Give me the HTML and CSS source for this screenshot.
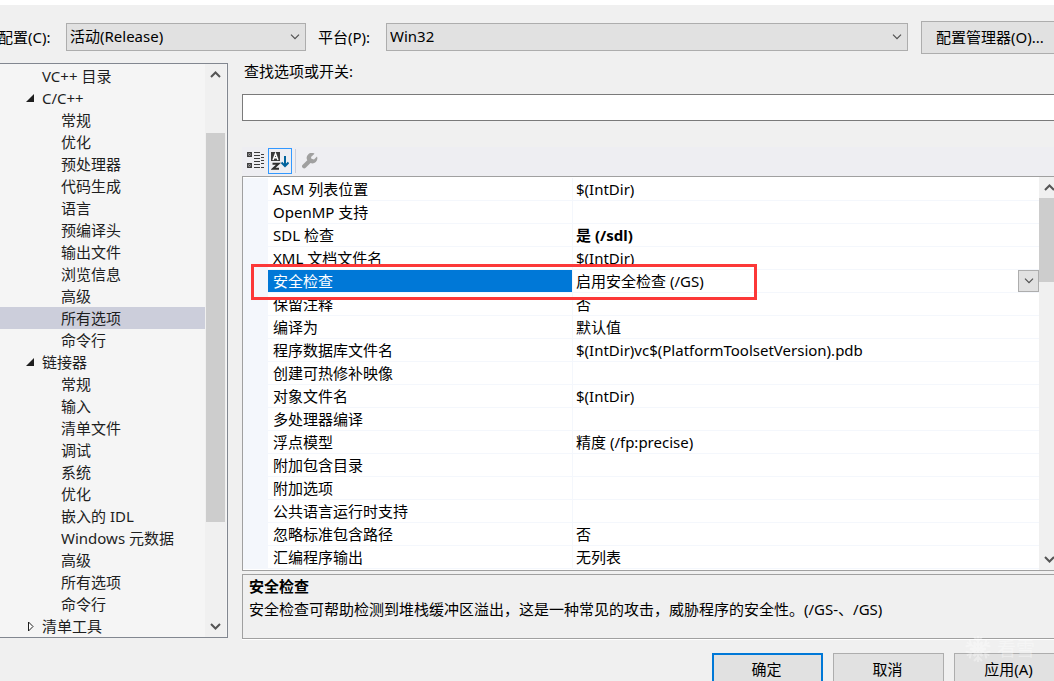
FILE: index.html
```html
<!DOCTYPE html>
<html lang="zh-CN">
<head>
<meta charset="utf-8">
<title>属性页</title>
<link rel="stylesheet" href="styles.css">
</head>
<body>
<main class="dialog">
  <div class="config-bar">
    <label class="config-label" for="config">配置(C):</label>
    <span class="select-wrap select-config">
      <select id="config"><option>活动(Release)</option></select>
      <svg class="chevron" viewBox="0 0 10 6"><path d="M1 .7l4 4 4-4"/></svg>
    </span>
    <label class="platform-label" for="platform">平台(P):</label>
    <span class="select-wrap select-platform">
      <select id="platform"><option>Win32</option></select>
      <svg class="chevron" viewBox="0 0 10 6"><path d="M1 .7l4 4 4-4"/></svg>
    </span>
    <button class="btn btn-manager" type="button">配置管理器(O)...</button>
  </div>

  <div class="content">
    <nav class="tree">
      <ul class="tree-list">
        <li class="group">VC++ 目录</li>
        <li class="group"><svg class="arrow" viewBox="0 0 8 8"><path d="M8 0v8H0z" fill="#1e1e1e"/></svg>C/C++</li>
        <li>常规</li>
        <li>优化</li>
        <li>预处理器</li>
        <li>代码生成</li>
        <li>语言</li>
        <li>预编译头</li>
        <li>输出文件</li>
        <li>浏览信息</li>
        <li>高级</li>
        <li class="current">所有选项</li>
        <li>命令行</li>
        <li class="group"><svg class="arrow" viewBox="0 0 8 8"><path d="M8 0v8H0z" fill="#1e1e1e"/></svg>链接器</li>
        <li>常规</li>
        <li>输入</li>
        <li>清单文件</li>
        <li>调试</li>
        <li>系统</li>
        <li>优化</li>
        <li>嵌入的 IDL</li>
        <li>Windows 元数据</li>
        <li>高级</li>
        <li>所有选项</li>
        <li>命令行</li>
        <li class="group"><svg class="arrow arrow-closed" viewBox="0 0 6 11"><path d="M.5 1v9L5 5.5z" fill="#fff" stroke="#1e1e1e"/></svg>清单工具</li>
      </ul>
      <div class="scrollbar scrollbar-tree">
        <button type="button" class="scroll-btn" aria-label="向上滚动"><svg viewBox="0 0 11 7"><path d="M1 6l4.500-4.500L10 6"/></svg></button>
        <div class="track track-tree"><div class="thumb"></div></div>
        <button type="button" class="scroll-btn" aria-label="向下滚动"><svg viewBox="0 0 11 7"><path d="M1 1l4.500 4.500L10 1"/></svg></button>
      </div>
    </nav>

    <section class="panel">
      <label class="search-label" for="search">查找选项或开关:</label>
      <input class="search" id="search" type="text">
      <div class="toolbar">
        <button type="button" class="tool" aria-label="按分类顺序">
          <svg width="18" height="17" viewBox="0 0 18 17" fill="none" stroke="#3b3b3b"><path stroke-width="1.500" d="M.8.8h3.400v3.400H.8zM.8 11.800h3.400v3.400H.8z"/><path d="M2 2.500h1M2 13.500h1M7 .5h6M7 3.500h6M7 6.500h6M7 9.500h6M7 12.500h6M7 15.500h6M14 2.500h3M14 5.500h3M14 8.500h3M14 11.500h3M14 15.500h3"/></svg>
        </button>
        <button type="button" class="tool tool-on" aria-label="按字母顺序">
          <svg width="18" height="18" viewBox="0 0 18 18" fill="none"><path d="M0 0h9v9H0z" fill="#3b3b3b"/><path d="M2 8l2.500-6.500L7 8M3 5.800h3" stroke="#fff" stroke-width="1.400"/><path d="M1.500 11.700h6L2 16.800h6" stroke="#2d2d2d" stroke-width="2"/><path d="M14 4v10M10.500 10.500L14 14l3.500-3.500" stroke="#00639c" stroke-width="2"/></svg>
        </button>
        <span class="tool-sep"></span>
        <button type="button" class="tool" aria-label="属性页" disabled>
          <svg width="16" height="16" viewBox="0 0 16 16"><path d="M12.500.7A5 5 0 0 0 5.300 7.200L.7 11.800a2.100 2.100 0 0 0 3 3L8.500 10A5 5 0 0 0 15 3.600L12 6.500 9.400 5.800 9 3.900z" fill="#a0a0a0"/></svg>
        </button>
      </div>

      <div class="grid">
        <table class="props">
          <colgroup><col class="col-gutter"><col class="col-name"><col></colgroup>
          <tbody>
            <tr><td></td><th>ASM 列表位置</th><td>$(IntDir)</td></tr>
            <tr><td></td><th>OpenMP 支持</th><td></td></tr>
            <tr><td></td><th>SDL 检查</th><td class="strong">是 (/sdl)</td></tr>
            <tr><td></td><th>XML 文档文件名</th><td>$(IntDir)</td></tr>
            <tr class="selected"><td></td><th>安全检查<span class="highlight"></span></th><td class="editing">启用安全检查 (/GS)<button type="button" class="drop" aria-label="展开"><svg viewBox="0 0 10 6"><path d="M1 .7l4 4 4-4"/></svg></button></td></tr>
            <tr><td></td><th>保留注释</th><td>否</td></tr>
            <tr><td></td><th>编译为</th><td>默认值</td></tr>
            <tr><td></td><th>程序数据库文件名</th><td>$(IntDir)vc$(PlatformToolsetVersion).pdb</td></tr>
            <tr><td></td><th>创建可热修补映像</th><td></td></tr>
            <tr><td></td><th>对象文件名</th><td>$(IntDir)</td></tr>
            <tr><td></td><th>多处理器编译</th><td></td></tr>
            <tr><td></td><th>浮点模型</th><td>精度 (/fp:precise)</td></tr>
            <tr><td></td><th>附加包含目录</th><td></td></tr>
            <tr><td></td><th>附加选项</th><td></td></tr>
            <tr><td></td><th>公共语言运行时支持</th><td></td></tr>
            <tr><td></td><th>忽略标准包含路径</th><td>否</td></tr>
            <tr><td></td><th>汇编程序输出</th><td>无列表</td></tr>
          </tbody>
        </table>
        <div class="scrollbar">
          <button type="button" class="scroll-btn" aria-label="向上滚动"><svg viewBox="0 0 11 7"><path d="M1 6l4.500-4.500L10 6"/></svg></button>
          <div class="track"><div class="thumb thumb-grid"></div></div>
          <button type="button" class="scroll-btn" aria-label="向下滚动"><svg viewBox="0 0 11 7"><path d="M1 1l4.500 4.500L10 1"/></svg></button>
        </div>
      </div>

      <div class="description">
        <strong>安全检查</strong>
        <p>安全检查可帮助检测到堆栈缓冲区溢出，这是一种常见的攻击，威胁程序的安全性。(/GS-、/GS)</p>
      </div>
    </section>
  </div>

  <footer class="actions">
    <button type="button" class="btn btn-default">确定</button>
    <button type="button" class="btn">取消</button>
    <button type="button" class="btn">应用(A)</button>
    <div class="watermark">
      <svg width="26" height="28" viewBox="-13 -14 26 28"><g id="arm"><path d="M0 0v-13M-4-12l4 4 4-4M-4-7l4 4 4-4"/></g><use href="#arm" transform="rotate(60)"/><use href="#arm" transform="rotate(120)"/><use href="#arm" transform="rotate(180)"/><use href="#arm" transform="rotate(240)"/><use href="#arm" transform="rotate(300)"/></svg>
      <span>看雪</span>
    </div>
  </footer>
</main>
</body>
</html>
```
FILE: styles.css
```css
* { box-sizing: border-box; }

body {
  margin: 0;
  height: 100vh;
  overflow: hidden;
  background: #f0f0f0;
  color: #000;
  font: 15px/20px "Noto Sans", "Noto Sans CJK SC", sans-serif;
}

button, select, input { font: inherit; color: inherit; margin: 0; }

.dialog {
  margin: 0 -11px 0 -2px;
  border-top: 5px solid #fff;
}

.config-bar {
  display: flex;
  align-items: center;
  padding-top: 16px;
  white-space: nowrap;
}
.config-label, .platform-label { width: 68px; flex: none; padding-bottom: 2px; }
.platform-label { margin-left: 12px; }
.select-wrap { position: relative; height: 28px; }
.select-config { width: 240px; flex: none; }
.select-platform { flex: 1; }
.select-wrap select {
  display: block;
  width: 100%;
  height: 28px;
  padding: 0 24px 2px 3px;
  border: 1px solid #adadad;
  border-radius: 0;
  background: #e1e1e1;
  appearance: none;
}
.chevron {
  position: absolute;
  right: 6px;
  top: 11px;
  width: 10px;
  height: 6px;
  pointer-events: none;
}
.chevron path, .drop path { fill: none; stroke: #505050; stroke-width: 1.2; }

.btn {
  width: 111px;
  height: 33px;
  padding: 0 2px 2px 0;
  border: 1px solid #adadad;
  background: #e1e1e1;
}
.btn-manager { width: 140px; margin: 0 4px 0 13px; flex: none; }
.btn-default { border: 2px solid #0078d7; }

.content { display: flex; margin-top: 9px; }
.config-bar .select-wrap { margin-bottom: 2px; }

.tree {
  display: flex;
  flex: none;
  align-self: flex-start;
  width: 230px;
  border: 1px solid #828790;
  background: #f5f5f5;
  color: #1e1e1e;
}
.tree-list {
  flex: 1;
  margin: 0;
  padding: 1px 0 0;
  list-style: none;
}
.tree-list li {
  position: relative;
  height: 22px;
  line-height: 22px;
  padding-left: 62px;
  white-space: nowrap;
}
.tree-list .group { padding-left: 43px; }
.tree-list .current { background: #cccedb; }
.arrow {
  position: absolute;
  left: 27px;
  top: 7px;
  width: 8px;
  height: 8px;
}
.arrow-closed { left: 29px; top: 6px; width: 6px; height: 11px; }

.scrollbar {
  display: flex;
  flex-direction: column;
  flex: none;
  width: 21px;
  background: #f0f0f0;
}
.scrollbar-tree { margin-right: 1px; }
.scroll-btn {
  display: flex;
  align-items: center;
  justify-content: center;
  height: 21px;
  padding: 0;
  border: 0;
  background: none;
}
.scroll-btn svg { width: 11px; height: 7px; }
.scroll-btn path { fill: none; stroke: #555; stroke-width: 2; }
.track { flex: 1; display: flex; flex-direction: column; }
.track-tree { padding: 48px 1px 94px; }
.thumb { flex: 1; background: #cdcdcd; }
.thumb-grid { flex: none; height: 84px; }

.panel { flex: 1; min-width: 0; margin: 0 4px 0 14px; }
.search-label { display: block; height: 31px; line-height: 17px; padding-left: 2px; }
.search {
  display: block;
  width: 100%;
  height: 27px;
  border: 1px solid #7a7a7a;
  background: #fff;
}

.toolbar {
  display: flex;
  align-items: center;
  height: 29px;
  margin-top: 26px;
  padding: 0 0 2px 2px;
  background: #eeeef2;
}
.tool {
  display: flex;
  align-items: center;
  justify-content: center;
  width: 24px;
  height: 26px;
  padding: 0;
  border: 0;
  background: none;
}
.tool-on { border: 1px solid #3399ff; }
.tool-sep { width: 1px; height: 24px; margin: 0 2px 0 3px; background: #cccedb; }

.grid {
  display: flex;
  border: 1px solid #a0a0a0;
  background: #fff;
}
.props {
  flex: 1;
  table-layout: fixed;
  width: 100%;
  margin: 1px 0;
  border-collapse: separate;
  border-spacing: 0;
}
.col-gutter { width: 25px; }
.col-name { width: 305px; }
.props td, .props th {
  height: 23px;
  padding: 0 0 0 3px;
  border-bottom: 1px solid #f4f7fc;
  line-height: 22px;
  font-weight: normal;
  text-align: left;
  white-space: nowrap;
}
.props th { padding-left: 5px; border-right: 1px solid #f4f7fc; }
.props td:first-child { background: #f4f7fc; }
.props .strong { font-weight: bold; }
.selected th { position: relative; background: #0078d7; background-clip: padding-box; color: #fff; }
.highlight {
  position: absolute;
  z-index: 2;
  left: -17px;
  top: -6px;
  width: 506px;
  height: 36px;
  border: 3px solid #fc3838;
}
.editing { position: relative; }
.drop {
  position: absolute;
  right: 0;
  top: 0;
  display: flex;
  align-items: center;
  justify-content: center;
  width: 21px;
  height: 22px;
  padding: 0;
  border: 1px solid #adadad;
  background: #e1e1e1;
}
.drop svg { width: 10px; height: 6px; }

.description {
  height: 65px;
  margin-top: 3px;
  padding: 0 6px;
  border: 1px solid #a0a0a0;
  box-shadow: 0 1px #fff;
  line-height: 23px;
}
.description strong { display: block; }
.description p { margin: 0; white-space: nowrap; }

.actions {
  position: relative;
  display: flex;
  justify-content: flex-end;
  gap: 10px;
  margin-top: 14px;
}
.watermark {
  position: absolute;
  right: 30px;
  top: -18px;
  display: flex;
  align-items: center;
  gap: 6px;
  color: #fff;
  font-size: 19px;
  opacity: 0.35;
  pointer-events: none;
}
.watermark path { fill: none; stroke: #fff; stroke-width: 2; }
```
